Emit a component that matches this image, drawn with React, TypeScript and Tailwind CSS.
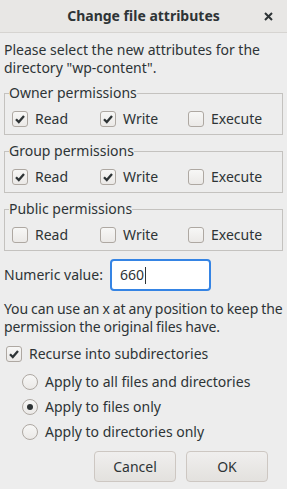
import React from "react";

function Check({ on }: { on?: boolean }) {
  return (
    <span className="flex h-[16px] w-[16px] shrink-0 items-center justify-center rounded-[3px] border border-[#aea8a2] bg-gradient-to-b from-[#f7f7f6] to-[#ebe9e7]">
      {on && (
        <svg width="12" height="12" viewBox="0 0 12 12">
          <path d="M2 6.2 L4.8 9 L10 3" fill="none" stroke="#2e3436" strokeWidth="2.3" />
        </svg>
      )}
    </span>
  );
}

function Radio({ on }: { on?: boolean }) {
  return (
    <span className="flex h-[16px] w-[16px] shrink-0 items-center justify-center rounded-full border border-[#aea8a2] bg-gradient-to-b from-[#f7f7f6] to-[#ebe9e7]">
      {on && <span className="h-[6px] w-[6px] rounded-full bg-[#2e3436]" />}
    </span>
  );
}

function Group({ title, values }: { title: string; values: boolean[] }) {
  const names = ["Read", "Write", "Execute"];
  return (
    <fieldset className="mx-[4px] border border-[#c4c2bf] px-[4px] pb-[6px] pt-0">
      <legend className="p-0 leading-[18px]">{title}</legend>
      <div className="grid grid-cols-[88px_88px_88px] pl-[3px] pt-[8px]">
        {names.map((n, i) => (
          <div key={n} className="flex h-[18px] items-center gap-[7px]">
            <Check on={values[i]} />
            <span>{n}</span>
          </div>
        ))}
      </div>
    </fieldset>
  );
}

function Option({ label, on }: { label: string; on?: boolean }) {
  return (
    <div className="flex h-[18px] items-center gap-[7px]">
      <Radio on={on} />
      <span>{label}</span>
    </div>
  );
}

export default function App() {
  return (
    <div className="flex h-[489px] w-[287px] flex-col bg-[#ededed] font-['Noto_Sans',sans-serif] text-[14px] leading-[18px] text-[#2e3436]">
      <div className="relative flex h-[33px] shrink-0 items-center justify-center border-b border-[#d6d4d1] bg-[#e8e7e5]">
        <span className="font-bold">Change file attributes</span>
        <svg className="absolute right-[14px] top-[12px]" width="9" height="9" viewBox="0 0 9 9">
          <path d="M1 1 L8 8 M8 1 L1 8" stroke="#2e3436" strokeWidth="2" />
        </svg>
      </div>
      <p className="px-[4px] pt-[8px]">
        Please select the new attributes for the directory "wp-content".
      </p>
      <div className="mt-[7px] flex flex-col gap-[7px]">
        <Group title="Owner permissions" values={[true, true, false]} />
        <Group title="Group permissions" values={[true, true, false]} />
        <Group title="Public permissions" values={[false, false, false]} />
      </div>
      <div className="mt-[8px] flex items-center px-[4px]">
        <span className="w-[106px]">Numeric value:</span>
        <div className="flex h-[32px] w-[101px] items-center rounded-[4px] border-2 border-[#3584e4] bg-white px-[8px]">
          660<span className="ml-px h-[17px] w-px bg-[#2e3436]" />
        </div>
      </div>
      <p className="px-[4px] pt-[9px] tracking-[-0.1px] [word-spacing:-0.5px]">
        <span className="block whitespace-nowrap">You can use an x at any position to keep the</span>
        <span className="block">permission the original files have.</span>
      </p>
      <div className="mt-[9px] flex h-[18px] items-center gap-[7px] pl-[6px]">
        <Check on />
        <span>Recurse into subdirectories</span>
      </div>
      <div className="mt-[10px] flex flex-col gap-[7px] pl-[22px]">
        <Option label="Apply to all files and directories" />
        <Option label="Apply to files only" on />
        <Option label="Apply to directories only" />
      </div>
      <div className="mt-[10px] flex justify-end gap-[10px] pr-[19px]">
        <button className="h-[31px] w-[82px] rounded-[4px] border border-[#cdc7c2] bg-gradient-to-b from-[#f0efee] to-[#e3e1de]">
          Cancel
        </button>
        <button className="h-[31px] w-[82px] rounded-[4px] border border-[#cdc7c2] bg-gradient-to-b from-[#f0efee] to-[#e3e1de]">
          OK
        </button>
      </div>
    </div>
  );
}
